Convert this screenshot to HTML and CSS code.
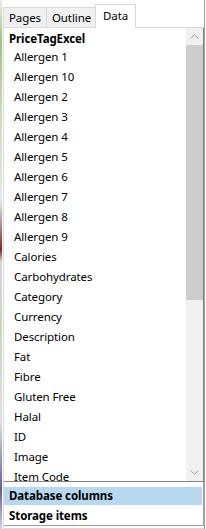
FILE: index.html
```html
<!DOCTYPE html>
<html>
<head>
<meta charset="utf-8">
<link rel="stylesheet" href="styles.css">
</head>
<body>
<div class="frame">
  <div class="edge"></div>
  <div class="main">
    <div class="tabs">
      <div class="tab">Pages</div>
      <div class="tab">Outline</div>
      <div class="tab active">Data</div>
    </div>
    <div class="panel">
      <div class="listbox">
        <div class="list">
          <div class="row head">PriceTagExcel</div>
          <div class="row">Allergen 1</div>
          <div class="row">Allergen 10</div>
          <div class="row">Allergen 2</div>
          <div class="row">Allergen 3</div>
          <div class="row">Allergen 4</div>
          <div class="row">Allergen 5</div>
          <div class="row">Allergen 6</div>
          <div class="row">Allergen 7</div>
          <div class="row">Allergen 8</div>
          <div class="row">Allergen 9</div>
          <div class="row">Calories</div>
          <div class="row">Carbohydrates</div>
          <div class="row">Category</div>
          <div class="row">Currency</div>
          <div class="row">Description</div>
          <div class="row">Fat</div>
          <div class="row">Fibre</div>
          <div class="row">Gluten Free</div>
          <div class="row">Halal</div>
          <div class="row">ID</div>
          <div class="row">Image</div>
          <div class="row">Item Code</div>
        </div>
        <div class="scrollbar">
          <div class="sbtn"><svg width="9" height="5" viewBox="0 0 9 5"><path d="M0.5 4.5 L4.5 0.8 L8.5 4.5" fill="none" stroke="#a3a3a3" stroke-width="1"/></svg></div>
          <div class="thumb"></div>
          <div class="track"></div>
          <div class="sbtn"><svg width="9" height="5" viewBox="0 0 9 5"><path d="M0.5 0.5 L4.5 4.2 L8.5 0.5" fill="none" stroke="#a3a3a3" stroke-width="1"/></svg></div>
        </div>
      </div>
      <div class="sources">
        <div class="src selected">Database columns</div>
        <div class="src">Storage items</div>
      </div>
    </div>
  </div>
</div>
</body>
</html>
```

FILE: styles.css
```css
html, body {
  margin: 0;
  padding: 0;
  background: #ffffff;
}
body {
  width: 206px;
  height: 529px;
  overflow: hidden;
  font-family: "Segoe UI", "Noto Sans", sans-serif;
  font-size: 11.5px;
  letter-spacing: -0.1px;
  color: #000000;
}
.frame {
  display: flex;
  height: 529px;
}
.edge {
  width: 2px;
  flex: none;
  background: linear-gradient(to bottom, #e8efe0 0px, #9fc27a 40px, #cfdcc0 120px, #e8e8e8 200px, #7a2a2a 250px, #d8d8d8 262px, #c9d6b8 330px, #e0e0e0 420px, #6a5aa0 490px, #d0d0e0 529px);
}
.main {
  width: 201px;
  flex: none;
  padding-left: 1px;
  border-right: 1px solid #a0a0a0;
  display: flex;
  flex-direction: column;
}
.tabs {
  display: flex;
  align-items: flex-end;
  height: 27px;
}
.tab {
  height: 19px;
  line-height: 19px;
  padding: 0 5px 0 5px;
  background: #f0f0f0;
  border: 1px solid #d9d9d9;
  border-bottom: none;
  margin-right: -1px;
}
.tab.active {
  background: #ffffff;
  height: 23px;
  line-height: 22px;
  padding: 0 7px 0 7px;
  position: relative;
  top: 1px;
  margin-left: -1px;
}
.panel {
  flex: 1;
  border: 1px solid #d9d9d9;
  border-right: none;
  display: flex;
  flex-direction: column;
}
.listbox {
  height: 453px;
  display: flex;
  border-bottom: 1px solid #828282;
  border-right: 1px solid #828282;
}
.list {
  flex: 1;
  overflow: hidden;
  padding-top: 1px;
}
.row {
  height: 20px;
  line-height: 20px;
  padding-left: 10px;
  white-space: nowrap;
}
.row.head {
  font-weight: bold;
  padding-left: 5px;
  height: 18px;
  line-height: 20px;
}
.scrollbar {
  width: 17px;
  flex: none;
  display: flex;
  flex-direction: column;
  background: #f0f0f0;
}
.sbtn {
  height: 17px;
  display: flex;
  align-items: center;
  justify-content: center;
  background: #f0f0f0;
}
.thumb {
  height: 255px;
  background: #cdcdcd;
}
.track {
  flex: 1;
}
.sources {
  padding-top: 5px;
  flex: 1;
  border-bottom: 1px solid #a0a0a0;
  border-right: 1px solid #a0a0a0;
  margin-bottom: 2px;
}
.src {
  height: 19px;
  line-height: 19px;
  padding-left: 5px;
  font-weight: bold;
  margin-right: 1px;
}
.src.selected {
  background: #b8d8f2;
  height: 18px;
  line-height: 18px;
  margin-bottom: 1px;
}
```
